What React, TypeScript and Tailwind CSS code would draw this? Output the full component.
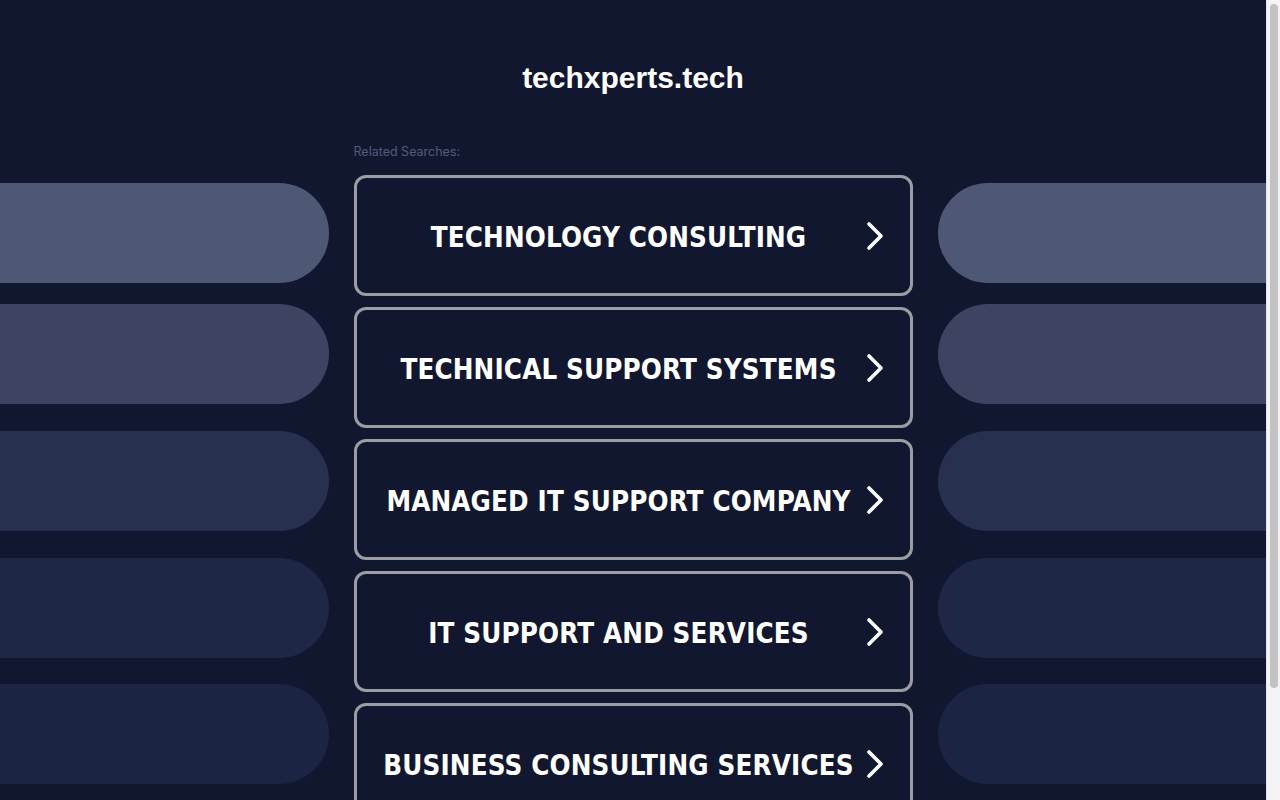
import React from "react";

const searches = [
  "TECHNOLOGY CONSULTING",
  "TECHNICAL SUPPORT SYSTEMS",
  "MANAGED IT SUPPORT COMPANY",
  "IT SUPPORT AND SERVICES",
  "BUSINESS CONSULTING SERVICES",
];

// decorative side pills, top margin + colour per row
const pills = [
  { mt: "mt-[43px]", bg: "bg-[#4e5874]" },
  { mt: "mt-[21px]", bg: "bg-[#3c4462]" },
  { mt: "mt-[27px]", bg: "bg-[#283050]" },
  { mt: "mt-[27px]", bg: "bg-[#1f2747]" },
  { mt: "mt-[26px]", bg: "bg-[#1c2444]" },
];

const Chevron: React.FC = () => (
  <svg width="20" height="30" viewBox="0 0 20 30" fill="none">
    <polyline
      points="4,3 16,15 4,27"
      stroke="#ffffff"
      strokeWidth="3.6"
      strokeLinecap="round"
      strokeLinejoin="round"
    />
  </svg>
);

const App: React.FC = () => {
  return (
    <div className="min-h-screen w-full bg-[#121730] font-['Liberation_Sans',Arial,sans-serif]">
      <div className="w-[1266px] pb-[110px]">
        {/* Header */}
        <div className="pt-[60px] pb-[44px] text-center">
          <h1 className="text-[30px] leading-[36px] font-bold text-white">techxperts.tech</h1>
        </div>

        <div className="flex gap-[25px]">
          {/* Left pills */}
          <div className="flex-1 flex flex-col">
            {pills.map((p, i) => (
              <div key={i} className={`${p.mt} ${p.bg} h-[100px] rounded-r-full`} />
            ))}
          </div>

          {/* Center */}
          <div className="w-[559px] shrink-0">
            <p className="text-[12.5px] leading-[24px] text-[#525b7a] font-['Inter',sans-serif] mb-[11px]">
              Related Searches:
            </p>
            <div className="flex flex-col gap-[11px]">
              {searches.map((s) => (
                <a
                  key={s}
                  href="#"
                  className="flex items-center h-[121px] rounded-[12px] border-[3px] border-[#9b9da3] pl-[19px] pr-[22px]"
                >
                  <span className="flex-1 pt-[5px] text-center text-white font-bold text-[27.5px] tracking-[0.15px] font-stretch-semi-condensed font-['DejaVu_Sans_Condensed','DejaVu_Sans',Verdana,sans-serif]">
                    {s}
                  </span>
                  <span className="w-[26px] flex justify-center">
                    <Chevron />
                  </span>
                </a>
              ))}
            </div>
          </div>

          {/* Right pills */}
          <div className="flex-1 flex flex-col">
            {pills.map((p, i) => (
              <div key={i} className={`${p.mt} ${p.bg} h-[100px] rounded-l-full`} />
            ))}
          </div>
        </div>
      </div>

      {/* browser scrollbar */}
      <div className="fixed top-0 right-0 h-screen w-[14px] bg-[#f4f4f4] border-l border-[#e6e6e6]">
        <div className="mx-auto mt-[4px] h-[684px] w-[8px] rounded-full bg-[#c2c2c2]" />
      </div>
    </div>
  );
};

export default App;
